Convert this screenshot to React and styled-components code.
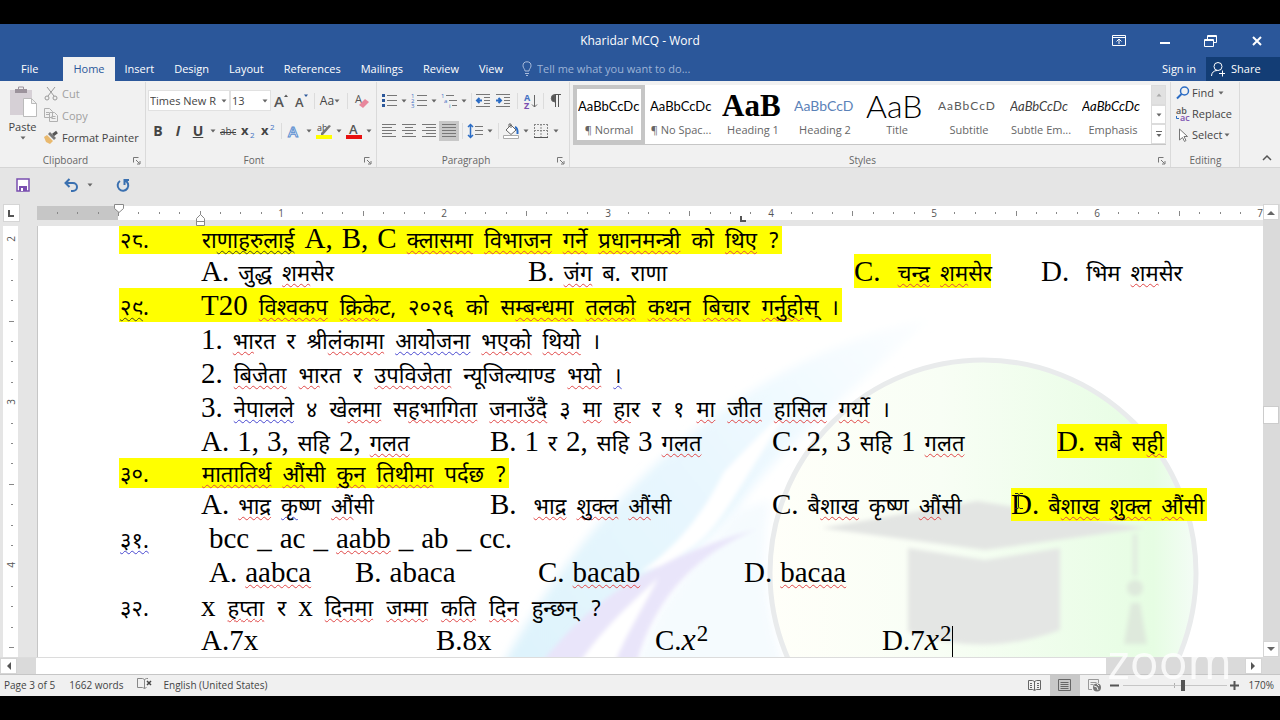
import React from 'react';
import styled, { createGlobalStyle, css } from 'styled-components';

const GlobalStyle = createGlobalStyle`
* { box-sizing: border-box; }
body {
    margin: 0;
    background: #000;
    font-family: 'Open Sans', 'Noto Sans', sans-serif;
    font-size: 12px;
    color: #444;
}
button, input, select { font: inherit; color: inherit; }
`;

const Screen = styled.div`
display: flex;
flex-direction: column;
height: 100vh;
padding: 24px 0;
overflow: hidden;
`;

/* ---------- title bar and tabs ---------- */

const Header = styled.header`
background: #2b579a;
color: #fff;
`;

const TitleBar = styled.div`
display: grid;
grid-template-columns: 1fr auto 1fr;
align-items: center;
height: 33px;
`;

const Title = styled.h1`
grid-column: 2;
margin: 0;
font-size: 12px;
font-weight: 400;
`;

const WindowButtons = styled.div`
display: flex;
justify-content: flex-end;
`;

const WindowButton = styled.button`
display: flex;
align-items: center;
justify-content: center;
width: 46px;
height: 32px;
padding: 0;
border: none;
background: transparent;
color: #fff;
`;

const TabRow = styled.nav`
display: flex;
align-items: stretch;
height: 24px;
`;

const Tab = styled.button`
height: 24px;
padding: ${props => (props.$file ? '0 25px 1px 21px' : '0 10px 1px')};
border: none;
background: ${props => (props.$active ? '#f1f1f1' : 'transparent')};
color: ${props => (props.$active ? '#2b579a' : '#fff')};
font-size: 11px;
white-space: nowrap;
`;

const TellMe = styled.label`
display: flex;
align-items: center;
gap: 5px;
flex: 1;
padding: 0 0 1px 9px;
color: #a9bcdb;
`;

const TellMeInput = styled.input`
width: 180px;
padding: 0;
border: none;
outline: none;
background: transparent;
font-size: 11px;
&::placeholder { color: #9db3d6; opacity: 1; }
`;

const ShareButton = styled.button`
display: flex;
align-items: center;
gap: 5px;
width: 74px;
padding: 0 0 1px 4px;
border: none;
background: #133d75;
color: #fff;
font-size: 11px;
`;

/* ---------- ribbon ---------- */

const Ribbon = styled.section`
display: flex;
height: 87px;
padding: 1px 0 0;
background: #f1f1f1;
border-bottom: 1px solid #d5d5d5;
`;

const Group = styled.div`
position: relative;
display: flex;
flex-direction: column;
flex: ${props => (props.$width ? `0 0 ${props.$width}` : '1 1 0')};
min-width: 0;
padding: ${props => props.$pad || '0 2px'};
border-right: 1px solid #dadada;
`;

const GroupBody = styled.div`
flex: 1;
display: flex;
flex-direction: ${props => (props.$row ? 'row' : 'column')};
`;

const GroupLabel = styled.div`
height: 16px;
padding-right: ${props => (props.$plain ? '4px' : '14px')};
line-height: 18px;
font-size: 10px;
text-align: center;
color: #666;
`;

const Launcher = styled.button`
position: absolute;
right: 4px;
bottom: 2px;
width: 8px;
height: 8px;
padding: 0;
border: none;
background: transparent;
display: flex;
`;

const ToolRow = styled.div`
display: flex;
align-items: center;
height: ${props => props.$height || '23px'};
`;

const Tool = styled.button`
display: flex;
align-items: center;
justify-content: center;
width: ${props => props.$width || '20px'};
height: 20px;
padding: 0;
border: none;
background: ${props => (props.$active ? '#c8c8c8' : 'transparent')};
font-size: ${props => (props.$small ? '12px' : '14px')};
line-height: 16px;
`;

const CaretBox = styled.button`
display: flex;
align-items: center;
justify-content: center;
width: 10px;
height: 20px;
padding: 0;
border: none;
background: transparent;
`;

const Separator = styled.span`
display: flex;
justify-content: center;
width: ${props => props.$width || '6px'};
height: 16px;
&::after { content: ''; width: 1px; background: #dcdcdc; }
`;

const PasteButton = styled.button`
display: flex;
flex-direction: column;
align-items: center;
width: 42px;
padding: 4px 1px 0 0;
border: none;
background: transparent;
font-size: 11px;
gap: 2px;
`;

const ClipboardList = styled.div`
display: flex;
flex-direction: column;
`;

const LabelTool = styled.button`
display: flex;
align-items: center;
gap: ${props => (props.$tight ? '2px' : '4px')};
height: ${props => props.$height || '22px'};
padding: 0;
border: none;
background: transparent;
font-size: 11px;
color: ${props => (props.$muted ? '#a0a0a0' : '#444')};
white-space: nowrap;
`;

const ComboBox = styled.div`
position: relative;
width: ${props => props.$width};
height: 21px;
border: 1px solid #e1e1e1;
background: #fff;
`;

const ComboSelect = styled.select`
width: 100%;
height: 19px;
padding: 0 9px 0 1px;
border: none;
background: transparent;
appearance: none;
font-size: 11px;
`;

const ComboCaret = styled.span`
position: absolute;
right: 2px;
top: 8px;
display: flex;
pointer-events: none;
`;

const Gallery = styled.div`
display: flex;
height: 60px;
margin-top: 3px;
background: #fff;
border-bottom: 1px solid #c6c6c6;
`;

const GalleryItems = styled.div`
display: flex;
flex: 1;
overflow: hidden;
`;

const StyleCard = styled.button`
display: flex;
flex-direction: column;
align-items: center;
flex: 0 0 72px;
height: 59px;
padding: ${props => (props.$active ? '0' : '4px')};
border: ${props => (props.$active ? '4px solid #c6c6c6' : 'none')};
background: #fff;
font-size: 11px;
color: #666;
white-space: nowrap;
`;

const Preview = styled.span`
display: flex;
align-items: center;
width: 62px;
height: 33px;
overflow: hidden;
font-family: ${props => props.$font || 'Lato, sans-serif'};
font-size: ${props => props.$size || '13px'};
font-weight: ${props => props.$weight || 400};
font-style: ${props => (props.$italic ? 'italic' : 'normal')};
letter-spacing: ${props => (props.$spaced ? '1px' : 'normal')};
color: ${props => props.$color || '#000'};
line-height: 32px;
`;

const GalleryScroll = styled.div`
display: flex;
flex-direction: column;
width: 15px;
`;

const GalleryButton = styled.button`
flex: 1;
display: flex;
align-items: center;
justify-content: center;
padding: 0;
border: 1px solid #dcdcdc;
background: ${props => (props.$muted ? '#e1e1e1' : '#fff')};
`;

const RibbonEnd = styled.div`
display: flex;
align-items: flex-end;
justify-content: center;
width: 40px;
padding: 0 0 0 14px;
`;

const QuickAccess = styled.div`
display: flex;
align-items: center;
height: 36px;
padding: 0 0 2px 13px;
background: #e5e5e5;
`;

const QuickSpace = styled.span`
width: ${props => props.$width};
`;

/* ---------- work area ---------- */

const WorkArea = styled.div`
display: flex;
flex: 1;
min-height: 0;
background: #e5e5e5;
`;

const LeftRail = styled.div`
display: flex;
flex-direction: column;
width: 37px;
padding-left: 3px;
`;

const TabSelector = styled.button`
display: flex;
align-items: center;
justify-content: center;
width: 17px;
height: 18px;
margin-bottom: 4px;
padding: 0;
border: 1px solid #d5d5d5;
background: #fff;
`;

const VerticalRuler = styled.svg`
flex: 1;
width: 15px;
min-height: 0;
background: #fff;
`;

const Center = styled.div`
flex: 1;
min-width: 0;
display: flex;
flex-direction: column;
`;

const HorizontalRuler = styled.svg`
display: block;
flex: 0 0 22px;
width: 100%;
overflow: visible;
`;

const Paper = styled.main`
position: relative;
flex: 1;
min-height: 0;
overflow: hidden;
background: #fff;
border-left: 1px solid #c6c6c6;
`;

const Watermark = styled.svg`
position: absolute;
left: 0;
top: 0;
width: 1225px;
height: 431px;
`;

const Sheet = styled.div`
position: relative;
padding-left: 81px;
font-family: 'Liberation Serif', serif;
font-size: 29px;
color: #000;
`;

const Line = styled.div`
display: flex;
height: ${props => props.$height || '34px'};
line-height: ${props => props.$leading || props.$height || '34px'};
white-space: nowrap;
`;

const highlight = css`
background: linear-gradient(#ff0, #ff0) 0 0 / ${props => props.$onWidth || '100%'} 100% no-repeat;
`;

const Cell = styled.div`
flex: none;
width: ${props => (props.$width ? `${props.$width}px` : 'auto')};
${props => props.$on && highlight}
`;

const Words = styled.span`
display: inline-flex;
align-items: baseline;
gap: ${props => props.$gap || 8}px;
padding-right: 2px;
`;

const Nepali = styled.span`
margin: 0 1px;
font-family: 'Noto Sans Devanagari', 'Noto Serif Devanagari', 'Lohit Devanagari', serif;
font-size: 22px;
`;

const Latin = styled.span`
font-family: 'Liberation Serif', serif;
`;

const Squiggle = styled.span`
text-decoration: underline wavy ${props => props.$color} 1px;
text-decoration-skip-ink: none;
text-underline-offset: 2px;
`;

const MathText = styled.span`
i { font-size: 32px; line-height: 0; }
sup { padding-left: 1px; font-size: 23px; line-height: 0; vertical-align: 9px; }
`;

const TextCaret = styled.span`
display: inline-block;
width: 1px;
height: 32px;
margin-left: 1px;
background: #000;
vertical-align: -8px;
`;

const Pointer = styled.svg`
position: absolute;
left: 975px;
top: 266px;
`;

const ScrollColumn = styled.div`
display: flex;
flex-direction: column;
justify-content: space-between;
width: 17px;
background: #dadada;
`;

const ScrollButton = styled.button`
display: flex;
align-items: center;
justify-content: center;
width: ${props => props.$width || '16px'};
height: 16px;
padding: 0;
border: 1px solid #d5d5d5;
background: #fff;
`;

const ScrollThumb = styled.div`
width: 16px;
height: 18px;
margin-top: -32px;
background: #fff;
border: 1px solid #ccc;
`;

const BottomScroll = styled.div`
position: relative;
display: flex;
height: 17px;
padding-right: 18px;
background: #dadada;
border-top: 1px solid #dcdcdc;
`;

const BottomThumb = styled.div`
flex: 1;
margin: 0 139px 0 19px;
background: #fff;
`;

const ZoomMark = styled.span`
position: absolute;
right: 48px;
top: -21px;
font-family: 'Open Sans', sans-serif;
font-size: 48px;
line-height: 48px;
color: #fff;
opacity: 0.8;
pointer-events: none;
`;

const StatusBar = styled.footer`
display: flex;
align-items: center;
height: 22px;
padding: 0 6px 1px 4px;
background: #f0f0f0;
border-top: 1px solid #c6c6c6;
font-size: 10px;
color: #444;
`;

const StatusText = styled.span`
margin-right: ${props => props.$gap || '0'};
white-space: nowrap;
`;

const ViewButton = styled.button`
display: flex;
align-items: center;
justify-content: center;
width: 30px;
height: 21px;
padding: 0;
border: none;
background: ${props => (props.$active ? '#c8c8c8' : 'transparent')};
`;

const ZoomSlider = styled.input`
appearance: none;
width: 104px;
height: 12px;
margin: 0 3px;
background: linear-gradient(#c6c6c6, #c6c6c6) center / 100% 1px no-repeat,
    linear-gradient(#b0b0b0, #b0b0b0) center / 1px 5px no-repeat;
&::-webkit-slider-thumb {
    appearance: none;
    width: 4px;
    height: 11px;
    background: #555;
}
`;

const StepButton = styled.button`
width: 10px;
padding: 0;
border: none;
background: transparent;
display: flex;
`;

/* ---------- icons ---------- */

const Icon = ({ size = 16, w, h, children }) => (
    <svg width={w || size} height={h || size} viewBox={`0 0 ${w || size} ${h || size}`} fill="none" stroke="#666" overflow="visible" aria-hidden="true">
        {children}
    </svg>
);

const Down = ({ color = '#666' }) => (
    <svg width="6" height="4" viewBox="0 0 6 4" aria-hidden="true"><path d="M0.5 0.5h5L3 3.5z" fill={color} /></svg>
);

const Caret = ({ label }) => <CaretBox aria-label={label}><Down /></CaretBox>;

const Corner = ({ label }) => (
    <Launcher aria-label={label}>
        <Icon size={8}><path d="M0.5 5.5v-5h5M3 3l3.5 3.5M7 4v3H4" stroke="#777" /></Icon>
    </Launcher>
);

const lines = rows => rows.map(([x, y, x2]) => <path key={`${x}-${y}`} d={`M${x} ${y}.5H${x2}`} stroke="#777" />);

const Tiny = ({ x, y, children, fill = '#4472c4', size = 6, weight = 400 }) => (
    <text x={x} y={y} fontSize={size} fill={fill} stroke="none" fontWeight={weight} fontFamily="Open Sans, sans-serif">{children}</text>
);

/* ---------- document ---------- */

const marks = { '{': '#e04848', '<': '#4848d0', '[': '#404020' };

// {..} spelling, <..> grammar, [..] style marks
const renderMarks = text =>
    text.split(/([{<[][^}>\]]*[}>\]])/).filter(Boolean).map((part, i) =>
        marks[part[0]]
            ? <Squiggle key={i} $color={marks[part[0]]}>{part.slice(1, -1)}</Squiggle>
            : part
    );

const Word = ({ text }) =>
    /[\u0900-\u097F?]/.test(text)
        ? <Nepali lang="ne">{renderMarks(text)}</Nepali>
        : <Latin>{renderMarks(text)}</Latin>;

const Text = ({ children, gap }) => (
    <Words $gap={gap}>
        {children.split(' ').map((word, i) => <Word key={i} text={word} />)}
    </Words>
);

const documentLines = [
    { no: '२८.', on: true, height: '28px', leading: '24px', cells: [{ text: 'रा[णाहरुलाई] A, B, C {क्लासमा} {विभाजन} {गर्ने} {प्रधानमन्त्री} को {थिए} ?', on: true, gap: 9 }] },
    { cells: [{ text: 'A. जुद्ध {शम}सेर', width: 327 }, { text: 'B. {जंग} ब. राणा', width: 326 }, { text: 'C.  {चन्द्र} {शम}सेर', width: 187, on: true, onWidth: '137px' }, { text: 'D.  भिम {शम}सेर' }] },
    { no: '[२९].', on: true, cells: [{ text: 'T20 {विश्\u200dवकप} {क्रिके}ट, २०२६ को स{म्बन्\u200dधमा} {तलको} {कथन} {बिचा}र {गर्नुहो}स् ।', on: true, gap: 10 }] },
    { cells: [{ text: '1. {भा}रत र श्री{लंकामा} <आयोजना> {भएको} {थियो} ।', gap: 9 }] },
    { cells: [{ text: '2. {बिजेता} {भा}रत र {उपविजेता} न्यूजिल्याण्ड {भयो} <।>', gap: 10 }] },
    { cells: [{ text: '3. <नेपालले> ४ खे{लमा} स{हभागिता} {जनाउँदै} ३ {मा} {हा}र र १ {मा} {जीत} {हासिल} {गर्यो} ।', gap: 10 }] },
    { cells: [{ text: 'A. 1, 3, सहि 2, {गलत}', width: 289 }, { text: 'B. 1 र 2, सहि 3 {गलत}', width: 282 }, { text: 'C. 2, 3 सहि 1 {गलत}', width: 285 }, { text: 'D. सबै स{ही}', on: true }] },
    { no: '३०.', on: true, height: '30px', leading: '28px', cells: [{ text: '{मातातिर्थ} {औं}सी {कुन} {तिथीमा} पर्दछ ?', on: true, gap: 9 }] },
    { height: '33px', cells: [{ text: 'A. {भाद्र} <कृ>ष्ण {औं}सी', width: 289 }, { text: 'B.  {भाद्र} {शुक्ल} {औं}सी', width: 282 }, { text: 'C. बै{शाख} कृष्ण {औं}सी', width: 239 }, { text: 'D. बै{शाख} {शुक्ल} {औं}सी', on: true }] },
    { no: '<३१.>', indent: 8, cells: [{ text: 'bcc _ ac _ {aabb} _ ab _ cc.' }] },
    { indent: 8, cells: [{ text: 'A. {aabca}', width: 146 }, { text: 'B. abaca', width: 183 }, { text: 'C. {bacab}', width: 206 }, { text: 'D. {bacaa}' }] },
    { no: '३२.', cells: [{ text: 'x {हप्ता} र x {दिनमा} {जम्मा} {कति} {दिन} हुन्छन् ?', gap: 11 }] },
];

const DocumentLine = ({ line }) => (
    <Line $height={line.height} $leading={line.leading}>
        <Cell $width={82 + (line.indent || 0)} $on={line.on}>
            {line.no && <Text>{line.no}</Text>}
        </Cell>
        {line.cells.map(cell => (
            <Cell key={cell.text} $width={cell.width} $on={cell.on} $onWidth={cell.onWidth}>
                <Text gap={cell.gap}>{cell.text}</Text>
            </Cell>
        ))}
    </Line>
);

const range = n => Array.from({ length: n }, (_, i) => i);

const RulerTop = () => (
    <HorizontalRuler height="22" aria-label="Horizontal ruler">
        <rect x="0" y="2" width="100%" height="14" fill="#fff" />
        <rect x="0" y="2" width="81" height="14" fill="#c6c6c6" />
        {range(61).slice(1).map(i => {
            const x = Math.round(81 + (i - 4) * 20.4);
            if (i > 4 && (i - 4) % 8 === 0) {
                return <text key={i} x={x} y="13" fontSize="10" textAnchor="middle" fill="#555">{(i - 4) / 8}</text>;
            }
            const tall = i % 4 === 0;
            return <path key={i} d={`M${x}.5 ${tall ? 7 : 8}v${tall ? 5 : 2}`} stroke="#888" />;
        })}
        <path d="M77.5 0.5h9v4l-4.5 4-4.5-4z" fill="#fff" stroke="#888" />
        <path d="M159.5 21.5h8v-7l-4-4-4 4zM159.5 17.5h8" fill="#fff" stroke="#888" />
        <path d="M704 12v5h5" fill="none" stroke="#555" strokeWidth="2" />
    </HorizontalRuler>
);

const RulerSide = () => (
    <VerticalRuler aria-label="Vertical ruler">
        {range(22).map(i => {
            const y = Math.round(13 + i * 20.4);
            if (i % 8 === 0) {
                return <text key={i} fontSize="10" textAnchor="middle" fill="#555" transform={`translate(12 ${y}) rotate(-90)`}>{2 + i / 8}</text>;
            }
            const wide = i % 4 === 0;
            return <path key={i} d={`M${wide ? 6 : 8} ${y}.5h${wide ? 5 : 2}`} stroke="#888" />;
        })}
    </VerticalRuler>
);

const PageArt = () => (
    <Watermark viewBox="38 226 1225 431" aria-hidden="true">
        <defs>
            <linearGradient id="disc" x1="0" x2="1">
                <stop offset="0" stopColor="#fffff9" />
                <stop offset="0.4" stopColor="#f8fef5" />
                <stop offset="0.9" stopColor="#e6fde3" />
                <stop offset="1" stopColor="#f4fcf6" />
            </linearGradient>
            <linearGradient id="blue" gradientUnits="userSpaceOnUse" x1="520" y1="657" x2="930" y2="320">
                <stop offset="0" stopColor="#def3fc" />
                <stop offset="0.5" stopColor="#e9f7fe" />
                <stop offset="1" stopColor="#fcfeff" />
            </linearGradient>
            <filter id="soft"><feGaussianBlur stdDeviation="2" /></filter>
            <filter id="softer"><feGaussianBlur stdDeviation="5" /></filter>
        </defs>
        <g filter="url(#softer)">
            <path d="M500 670C570 540 700 370 930 318C860 385 800 430 750 490C700 560 620 600 590 670z" fill="url(#blue)" />
            <path d="M636 670C650 610 690 570 740 510L770 500C760 560 765 610 785 670z" fill="#f5fbfe" />
        </g>
        <g filter="url(#soft)">
            <path d="M540 665C590 600 650 560 757 529C700 552 655 595 636 665z" fill="#e9e5fa" />
            <path d="M640 572C680 545 705 510 724 472C745 450 770 425 800 395C760 450 735 500 715 525C700 545 680 556 660 566z" fill="#fff" />
            <path d="M578 665C605 625 635 600 658 578C645 605 625 635 614 665z" fill="#fff" />
        </g>
        <circle cx="983" cy="573" r="213" fill="url(#disc)" stroke="#e9ebec" strokeWidth="5" />
        <g filter="url(#soft)">
            <path d="M822 528L977 501L1145 528L985 550z" fill="#e3e5e3" />
            <path d="M908 548L985 560L1060 548V630Q985 658 908 632z" fill="#e4e6e4" />
            <path d="M1135 534V576" stroke="#e0e9df" strokeWidth="4" />
            <circle cx="1135" cy="588" r="8" fill="#dee9dc" />
            <path d="M1131 603h9l7 41h-23z" fill="#dee9dc" />
        </g>
    </Watermark>
);

const stylePreviews = [
    { name: '¶ Normal', active: true },
    { name: '¶ No Spac...' },
    { name: 'Heading 1', sample: 'AaB', font: "'Liberation Serif', serif", size: '31px', weight: 700 },
    { name: 'Heading 2', sample: 'AaBbCcD', color: '#5b82b8', size: '14px' },
    { name: 'Title', sample: 'AaB', size: '32px', weight: 300 },
    { name: 'Subtitle', sample: 'AaBbCcD', color: '#5a5a5a', size: '12px', spaced: true },
    { name: 'Subtle Em...', color: '#404040', italic: true },
    { name: 'Emphasis', italic: true },
];

const tabs = ['Home', 'Insert', 'Design', 'Layout', 'References', 'Mailings', 'Review', 'View'];

const TopBar = () => (
    <Header>
        <TitleBar>
            <Title>Kharidar MCQ - Word</Title>
            <WindowButtons>
                <WindowButton aria-label="Ribbon display options">
                    <Icon w={14} h={11}><path d="M0.5 0.5h13v10h-13zM1 2.5h12M7 9V4.5M4.5 6.5L7 4l2.5 2.5" stroke="#fff" /></Icon>
                </WindowButton>
                <WindowButton aria-label="Minimize">
                    <Icon size={12}><path d="M1 8h10" stroke="#fff" strokeWidth="2" /></Icon>
                </WindowButton>
                <WindowButton aria-label="Restore">
                    <Icon w={14} h={13}><path d="M0.5 5.5h9v7h-9zM0.5 6.5h9M3.5 5V1.5h9v7H10M3.5 2.5h9" stroke="#fff" /></Icon>
                </WindowButton>
                <WindowButton aria-label="Close">
                    <Icon size={10}><path d="M1 1l8 8M9 1l-8 8" stroke="#fff" strokeWidth="2" /></Icon>
                </WindowButton>
            </WindowButtons>
        </TitleBar>
        <TabRow>
            <Tab $file>File</Tab>
            {tabs.map(name => <Tab key={name} $active={name === 'Home'}>{name}</Tab>)}
            <TellMe>
                <Icon w={10} h={15}><path d="M3 10C3 8 1 7 1 4.800A4 4 0 0 1 9 4.800C9 7 7 8 7 10zM3 12.500h4M4 14.500h2" stroke="#a9bcdb" /></Icon>
                <TellMeInput placeholder="Tell me what you want to do..." aria-label="Tell me what you want to do" />
            </TellMe>
            <Tab>Sign in</Tab>
            <ShareButton>
                <Icon><circle cx="8" cy="5.500" r="4" stroke="#fff" /><path d="M1.500 15C1.500 11.500 4 9.500 7 9.500M9 12.500h6M12.500 9.500v6" stroke="#fff" /></Icon>
                Share
            </ShareButton>
        </TabRow>
    </Header>
);

const ClipboardGroup = () => (
    <Group $width="146px">
        <GroupBody $row>
            <PasteButton>
                <Icon w={28} h={31}>
                    <path d="M1 4h22v25H1z" fill="#d6d0d6" stroke="none" />
                    <path d="M6 3h12v4H6z" fill="#9c939c" stroke="none" /><path d="M9.500 3V1h5v2" stroke="#9c939c" />
                    <path d="M14.500 12.500h8l5 5v13h-13zM22.500 12.500v5h5" fill="#fff" stroke="#bbb" />
                </Icon>
                Paste
                <Down />
            </PasteButton>
            <ClipboardList>
                <LabelTool $muted>
                    <Icon w={14} h={15}><path d="M3 1l7 9M11 1L4 10" stroke="#999" /><circle cx="3" cy="12" r="2" stroke="#999" /><circle cx="11" cy="12" r="2" stroke="#999" /></Icon>
                    Cut
                </LabelTool>
                <LabelTool $muted>
                    <Icon w={14} h={14}><path d="M0.500 0.500h5l3 3v6h-8zM5.500 4.500h5l3 3v6h-8zM2 4.500h3M2 6.500h3M7.500 8.500h4M7.500 10.500h4" fill="#f1f1f1" stroke="#b0b0b0" /></Icon>
                    Copy
                </LabelTool>
                <LabelTool>
                    <Icon w={14} h={13}><path d="M0 6l3-2 6 6-3 3-4-2z" fill="#e9b96e" stroke="none" /><path d="M4 3l6 6 2-2-6-6z" fill="#777" stroke="none" /><path d="M9 4l4-3" stroke="#555" strokeWidth="3" /></Icon>
                    Format Painter
                </LabelTool>
            </ClipboardList>
        </GroupBody>
        <GroupLabel>Clipboard</GroupLabel>
        <Corner label="Clipboard options" />
    </Group>
);

const FontGroup = () => (
    <Group $width="231px">
        <GroupBody>
            <ToolRow $height="37px">
                <ComboBox $width="82px">
                    <ComboSelect aria-label="Font"><option>Times New R</option></ComboSelect>
                    <ComboCaret><Down /></ComboCaret>
                </ComboBox>
                <ComboBox $width="41px">
                    <ComboSelect aria-label="Font size"><option>13</option></ComboSelect>
                    <ComboCaret><Down /></ComboCaret>
                </ComboBox>
                <Tool aria-label="Grow font"><Icon><Tiny x="1" y="14" size={15} weight={600} fill="#555">A</Tiny><path d="M11 4l2-2.500L15 4z" fill="#555" stroke="none" /></Icon></Tool>
                <Tool aria-label="Shrink font"><Icon><Tiny x="2" y="14" size={13} weight={600} fill="#555">A</Tiny><path d="M11 1.500h4L13 4z" fill="#2b579a" stroke="none" /></Icon></Tool>
                <Separator />
                <Tool $width="26px" $small>Aa<Down /></Tool>
                <Separator $width="9px" />
                <Tool aria-label="Clear formatting"><Icon><Tiny x="1" y="10" size={11} fill="#555">A</Tiny><path d="M5 12l6-6 4 3-6 6z" fill="#e8879c" stroke="none" /></Icon></Tool>
            </ToolRow>
            <ToolRow>
                <Tool><b>B</b></Tool>
                <Tool><b><i>I</i></b></Tool>
                <Tool><b><u>U</u></b></Tool>
                <Caret label="Underline options" />
                <Tool aria-label="Strikethrough"><Icon><Tiny x="0" y="12" size={10} fill="#444">abc</Tiny><path d="M0 9.500h16" stroke="#444" /></Icon></Tool>
                <Tool aria-label="Subscript"><Icon><Tiny x="1" y="12" size={13} weight={700} fill="#444">x</Tiny><Tiny x="10" y="15" size={8}>2</Tiny></Icon></Tool>
                <Tool aria-label="Superscript"><Icon><Tiny x="1" y="12" size={13} weight={700} fill="#444">x</Tiny><Tiny x="10" y="7" size={8}>2</Tiny></Icon></Tool>
                <Separator />
                <Tool aria-label="Text effects"><Icon><text x="2" y="14" fontSize="15" fontWeight="600" stroke="#5b8fd0" fill="#fff" fontFamily="Open Sans">A</text></Icon></Tool>
                <Caret label="Text effects options" />
                <Tool aria-label="Highlight colour"><Icon><Tiny x="1" y="8" size={9} fill="#444">ab</Tiny><path d="M5 12l2 0 8-9-2-1-8 8z" fill="#777" stroke="none" /><path d="M0 12h16v4H0z" fill="#ff0" stroke="none" /></Icon></Tool>
                <Caret label="Highlight options" />
                <Tool aria-label="Font colour"><Icon><Tiny x="3" y="11" size={13} weight={600} fill="#555">A</Tiny><path d="M0 12h16v4H0z" fill="#e81010" stroke="none" /></Icon></Tool>
                <Caret label="Font colour options" />
            </ToolRow>
        </GroupBody>
        <GroupLabel>Font</GroupLabel>
        <Corner label="Font options" />
    </Group>
);

const ParagraphGroup = () => (
    <Group $width="193px">
        <GroupBody>
            <ToolRow $height="37px">
                <Tool aria-label="Bullets"><Icon>{lines([[6, 2, 16], [6, 7, 16], [6, 12, 16]])}<path d="M1 2.500h3M1 7.500h3M1 12.500h3" stroke="#2b579a" strokeWidth="3" /></Icon></Tool>
                <Caret label="Bullet options" />
                <Tool aria-label="Numbering"><Icon>{lines([[6, 2, 16], [6, 7, 16], [6, 12, 16]])}<Tiny x="0" y="5">1</Tiny><Tiny x="0" y="10">2</Tiny><Tiny x="0" y="15">3</Tiny></Icon></Tool>
                <Caret label="Numbering options" />
                <Tool aria-label="Multilevel list"><Icon>{lines([[5, 2, 13], [8, 7, 16], [11, 12, 16]])}<Tiny x="0" y="5">1</Tiny><Tiny x="3" y="10">a</Tiny><Tiny x="8" y="15">i</Tiny></Icon></Tool>
                <Caret label="Multilevel options" />
                <Separator $width="4px" />
                <Tool aria-label="Decrease indent"><Icon>{lines([[1, 1, 15], [9, 4, 15], [9, 7, 15], [9, 10, 15], [1, 13, 15]])}<path d="M7 7.500H2M4.500 5L2 7.500 4.500 10" stroke="#2b6cc4" strokeWidth="2" /></Icon></Tool>
                <Tool aria-label="Increase indent"><Icon>{lines([[1, 1, 15], [9, 4, 15], [9, 7, 15], [9, 10, 15], [1, 13, 15]])}<path d="M1 7.500h5M3.500 5L6 7.500 3.500 10" stroke="#2b6cc4" strokeWidth="2" /></Icon></Tool>
                <Separator $width="8px" />
                <Tool aria-label="Sort"><Icon><Tiny x="1" y="8" size={9} weight={700}>A</Tiny><Tiny x="1" y="16" size={9} weight={700} fill="#7a4fb0">Z</Tiny><path d="M11.500 2v12M9 11.500l2.500 2.500 2.500-2.500" /></Icon></Tool>
                <Separator $width="4px" />
                <Tool aria-label="Show marks"><Icon><path d="M8 1.500A3.500 3.500 0 0 0 8 9z" fill="#555" /><path d="M8 1.500h6M8.500 2v12M11.500 2v12" stroke="#555" /></Icon></Tool>
            </ToolRow>
            <ToolRow>
                <Tool aria-label="Align left"><Icon>{lines([[1, 1, 15], [1, 4, 11], [1, 7, 15], [1, 10, 11], [1, 13, 15]])}</Icon></Tool>
                <Tool aria-label="Align centre"><Icon>{lines([[1, 1, 15], [4, 4, 12], [1, 7, 15], [4, 10, 12], [1, 13, 15]])}</Icon></Tool>
                <Tool aria-label="Align right"><Icon>{lines([[1, 1, 15], [5, 4, 15], [1, 7, 15], [5, 10, 15], [1, 13, 15]])}</Icon></Tool>
                <Tool aria-label="Justify" $active><Icon>{lines([[1, 1, 15], [1, 4, 15], [1, 7, 15], [1, 10, 15], [1, 13, 15]])}</Icon></Tool>
                <Separator />
                <Tool aria-label="Line spacing"><Icon>{lines([[8, 3, 16], [8, 7, 16], [8, 11, 16]])}<path d="M3.500 1.500v13M1 4l2.500-2.500L6 4M1 12l2.500 2.500L6 12" stroke="#2b6cc4" strokeWidth="1.500" /></Icon></Tool>
                <Caret label="Line spacing options" />
                <Separator />
                <Tool aria-label="Shading"><Icon><path d="M3 7l5-5 5 5-5 4.500zM6 4V1h2v4" fill="#fff" /><path d="M12 4q3 1 2.500 7" stroke="#2b6cc4" strokeWidth="2" /><path d="M0.500 12.500h15v3H.5z" fill="#fff" stroke="#aaa" /></Icon></Tool>
                <Caret label="Shading options" />
                <Tool aria-label="Borders"><Icon><path d="M1 1.500h14M1.500 1v13M14.500 1v13M8 1v13M1 7.500h14" strokeDasharray="2 1" stroke="#888" /><path d="M1 14.500h14" stroke="#555" /></Icon></Tool>
                <Caret label="Border options" />
            </ToolRow>
        </GroupBody>
        <GroupLabel>Paragraph</GroupLabel>
        <Corner label="Paragraph options" />
    </Group>
);

const StylesGroup = () => (
    <Group $pad="0 4px 0 3px">
        <GroupBody>
            <Gallery>
                <GalleryItems>
                    {stylePreviews.map(s => (
                        <StyleCard key={s.name} $active={s.active}>
                            <Preview $font={s.font} $size={s.size} $weight={s.weight} $italic={s.italic} $color={s.color} $spaced={s.spaced}>
                                {s.sample || 'AaBbCcDc'}
                            </Preview>
                            {s.name}
                        </StyleCard>
                    ))}
                </GalleryItems>
                <GalleryScroll>
                    <GalleryButton $muted aria-label="Previous styles"><Icon w={6} h={4}><path d="M0.500 3.500h5L3 .5z" fill="#aaa" stroke="none" /></Icon></GalleryButton>
                    <GalleryButton aria-label="Next styles"><Down /></GalleryButton>
                    <GalleryButton aria-label="More styles"><Icon w={6} h={7}><path d="M0 .5h6" /><path d="M0.500 3h5L3 6z" fill="#666" stroke="none" /></Icon></GalleryButton>
                </GalleryScroll>
            </Gallery>
        </GroupBody>
        <GroupLabel>Styles</GroupLabel>
        <Corner label="Styles options" />
    </Group>
);

const EditingGroup = () => (
    <Group $width="69px" $pad="0 0 0 5px">
        <GroupBody>
            <LabelTool $tight $height="21px">
                <Icon w={14} h={13}><circle cx="8.500" cy="5" r="4" stroke="#2b6cc4" strokeWidth="1.500" /><path d="M5.500 8L1 12.500" stroke="#2b6cc4" strokeWidth="2" /></Icon>
                Find <Caret label="Find options" />
            </LabelTool>
            <LabelTool $tight $height="21px">
                <Icon w={14} h={14}><Tiny x="0" y="7" size={9} weight={600} fill="#555">ab</Tiny><Tiny x="4" y="14" size={9} weight={600} fill="#7a4fb0">ac</Tiny><path d="M0.500 9v2.500H3" stroke="#2b6cc4" /></Icon>
                Replace
            </LabelTool>
            <LabelTool $tight $height="21px">
                <Icon w={14} h={14}><path d="M3.500 1v11l3-2.500 2 4 1.500-1-2-4h3.500z" fill="#fff" stroke="#777" /></Icon>
                Select <Down />
            </LabelTool>
        </GroupBody>
        <GroupLabel $plain>Editing</GroupLabel>
    </Group>
);

export default function App() {
    return (
        <Screen>
            <GlobalStyle />
            <TopBar />
            <Ribbon>
                <ClipboardGroup />
                <FontGroup />
                <ParagraphGroup />
                <StylesGroup />
                <EditingGroup />
                <RibbonEnd>
                    <Tool aria-label="Collapse ribbon" $width="12px"><Icon w={10} h={7}><path d="M1 6l4-4 4 4" stroke="#555" strokeWidth="1.500" /></Icon></Tool>
                </RibbonEnd>
            </Ribbon>
            <QuickAccess>
                <Tool aria-label="Save"><Icon w={14} h={14}><path d="M1 1h12v12H1z" stroke="#7a4fb0" strokeWidth="1.500" fill="#fff" /><path d="M3 8h8v5H3z" fill="#7a4fb0" stroke="none" /><path d="M5 10h2v3H5z" fill="#fff" stroke="none" /></Icon></Tool>
                <QuickSpace $width="28px" />
                <Tool aria-label="Undo"><Icon w={15} h={14}><path d="M2 5h7a4 4 0 0 1 0 8H7M5.500 1L1.500 5l4 4" stroke="#3a70b0" strokeWidth="2" /></Icon></Tool>
                <QuickSpace $width="4px" />
                <Caret label="Undo options" />
                <QuickSpace $width="18px" />
                <Tool aria-label="Redo"><Icon w={14} h={14}><path d="M9 2.500A5.300 5.300 0 1 1 4 3M8.500 7V2H13" stroke="#3a70b0" strokeWidth="2" /></Icon></Tool>
            </QuickAccess>
            <WorkArea>
                <LeftRail>
                    <TabSelector aria-label="Tab selector"><Icon size={7}><path d="M1 0v6h5" stroke="#555" strokeWidth="2" /></Icon></TabSelector>
                    <RulerSide />
                </LeftRail>
                <Center>
                    <RulerTop />
                    <Paper>
                        <PageArt />
                        <Sheet>
                            {documentLines.map((line, i) => <DocumentLine key={i} line={line} />)}
                            <Line>
                                <Cell $width={82} />
                                <Cell $width={235}>A.7x</Cell>
                                <Cell $width={219}>B.8x</Cell>
                                <Cell $width={227}>C.<MathText><i>x</i><sup>2</sup></MathText></Cell>
                                <Cell>D.<MathText>7<i>x</i><sup>2</sup></MathText><TextCaret /></Cell>
                            </Line>
                        </Sheet>
                        <Pointer width="12" height="18" viewBox="0 0 12 18" fill="none" stroke="#222" aria-hidden="true">
                            <path d="M2 1.500h3l1 1 1-1h3M5.500 2.500v13M2 16.500h3l1-1 1 1h3" />
                        </Pointer>
                    </Paper>
                </Center>
                <ScrollColumn>
                    <ScrollButton aria-label="Scroll up"><Icon w={8} h={5}><path d="M0 5h8L4 1z" fill="#666" stroke="none" /></Icon></ScrollButton>
                    <ScrollThumb />
                    <ScrollButton aria-label="Scroll down"><Icon w={8} h={5}><path d="M0 0h8L4 4z" fill="#666" stroke="none" /></Icon></ScrollButton>
                </ScrollColumn>
            </WorkArea>
            <BottomScroll>
                <ScrollButton $width="17px" aria-label="Scroll left"><Icon w={5} h={8}><path d="M5 0v8L1 4z" fill="#555" stroke="none" /></Icon></ScrollButton>
                <BottomThumb />
                <ScrollButton $width="17px" aria-label="Scroll right"><Icon w={5} h={8}><path d="M0 0v8l4-4z" fill="#555" stroke="none" /></Icon></ScrollButton>
                <ZoomMark>zoom</ZoomMark>
            </BottomScroll>
            <StatusBar>
                <StatusText $gap="14px">Page 3 of 5</StatusText>
                <StatusText $gap="14px">1662 words</StatusText>
                <StatusText $gap="11px"><Icon w={15} h={11}><path d="M7.500 1.500v9M0.500 .5h5l2 1 2-1H11M.5.5v9h5l2 1 2-1" stroke="#888" /><path d="M10 3l4 4M14 3l-4 4" stroke="#444" strokeWidth="1.500" /></Icon></StatusText>
                <StatusText $gap="auto">English (United States)</StatusText>
                <ViewButton aria-label="Read mode"><Icon w={13} h={11}><path d="M.5.5h4l2 1 2-1h4v9h-4l-2 1-2-1h-4zM6.500 1v9M2 3.500h2M2 5.500h2M2 7.500h2M9 3.500h2M9 5.500h2M9 7.500h2" /></Icon></ViewButton>
                <ViewButton aria-label="Print layout" $active><Icon w={13} h={12}><path d="M.5.5h12v11H.5zM2.500 3.500h8M2.500 5.500h8M2.500 7.500h8M2.500 9.500h8" /></Icon></ViewButton>
                <ViewButton aria-label="Web layout"><Icon w={14} h={13}><path d="M4 10.500H.5V.5h10V4M2.500 3.500h6M2.500 5.500h3" stroke="#999" /><circle cx="9" cy="8.500" r="4" fill="#777" stroke="none" /><path d="M6 7l3 1 1 3M9 5l2 2" stroke="#eee" /></Icon></ViewButton>
                <StepButton aria-label="Zoom out"><Icon size={9}><path d="M0 4.500h9" stroke="#555" strokeWidth="2" /></Icon></StepButton>
                <ZoomSlider type="range" min="0" max="100" defaultValue="58" aria-label="Zoom" />
                <StepButton aria-label="Zoom in"><Icon size={9}><path d="M0 4.500h9M4.500 0v9" stroke="#555" strokeWidth="2" /></Icon></StepButton>
                <QuickSpace $width="9px" />
                <StatusText>170%</StatusText>
            </StatusBar>
        </Screen>
    );
}
